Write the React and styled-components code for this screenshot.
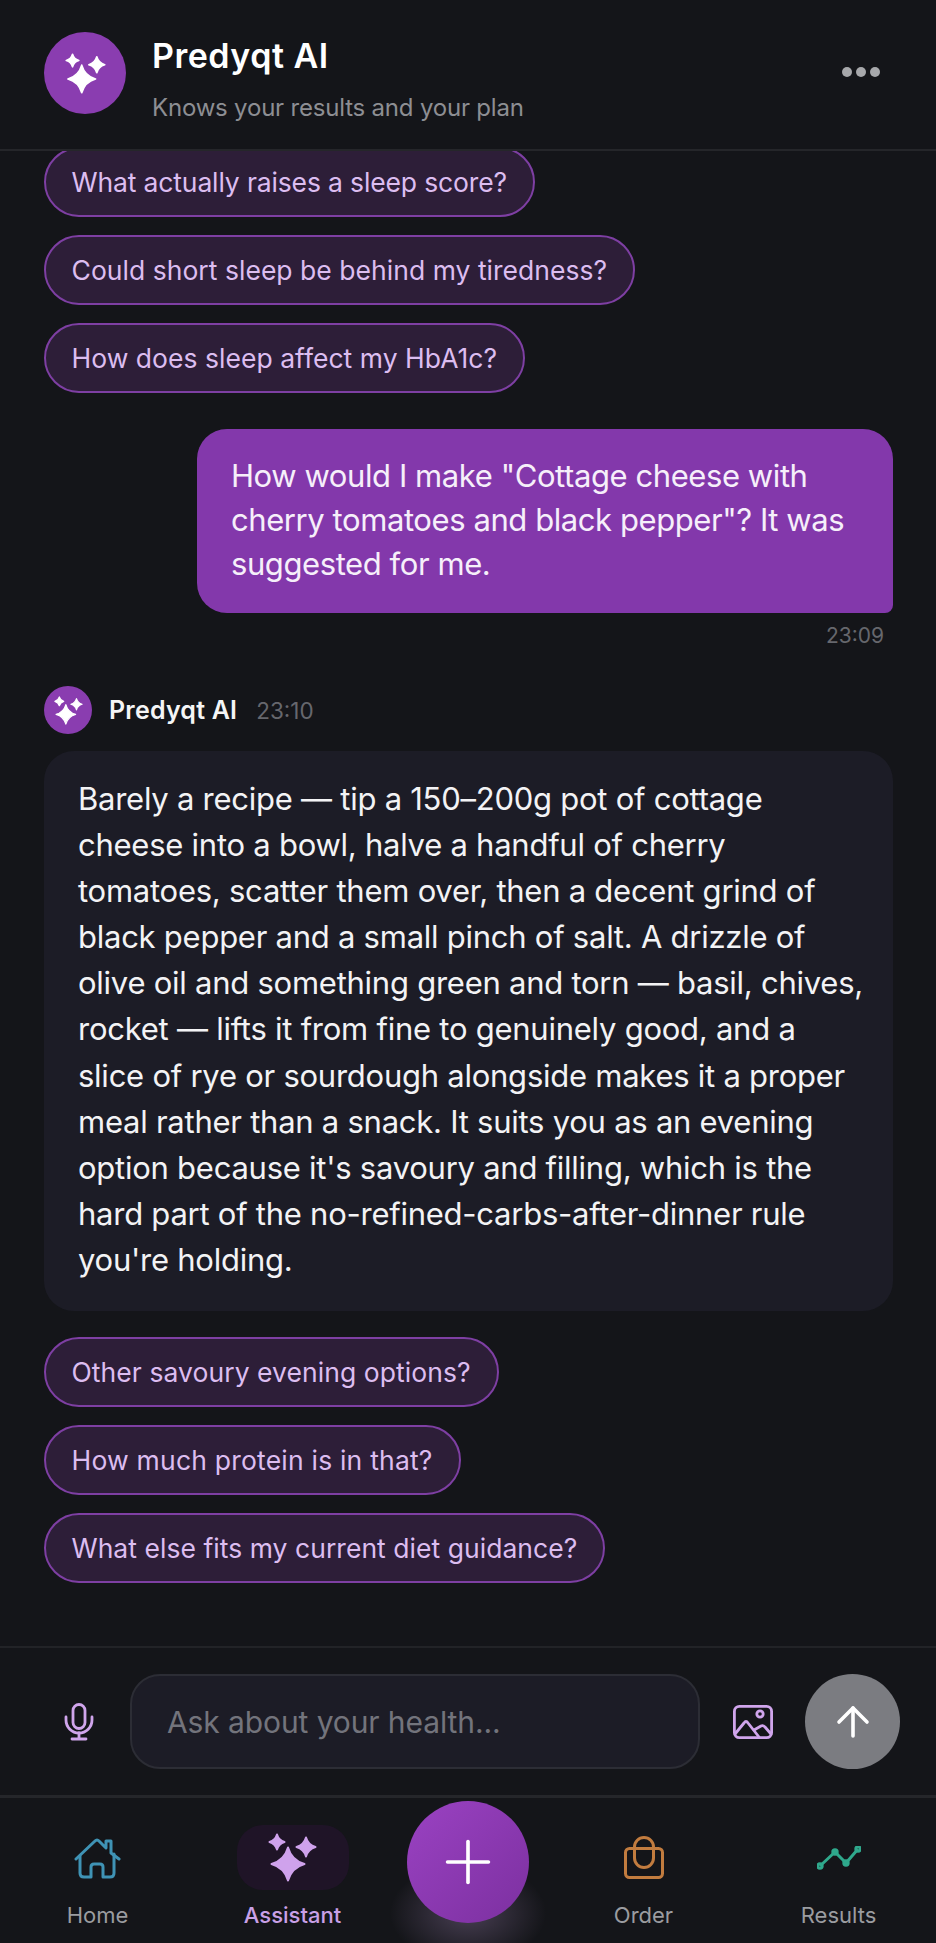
import React from "react";
import styled, { createGlobalStyle } from "styled-components";
import { ArrowUp, Plus } from "lucide-react";

const Global = createGlobalStyle`
  html, body { margin: 0; padding: 0; background: #141519; }
  * { box-sizing: border-box; }
`;

const Screen = styled.div`
  width: 936px; height: 1943px; display: flex; flex-direction: column;
  background: #141519; color: #fff; overflow: hidden;
  font-family: Inter, "Noto Sans", sans-serif;
`;
const Header = styled.header`
  height: 151px; flex: none; display: flex; align-items: flex-start;
  padding: 32px 56px 0 44px; gap: 26px; border-bottom: 2px solid #25262a;
`;
const Avatar = styled.div`
  width: ${p => p.$size}px; height: ${p => p.$size}px; border-radius: 50%; flex: none;
  background: #8a3db0; display: flex; align-items: center; justify-content: center; color: #fff;
`;
const HeadText = styled.div`
  flex: 1; display: flex; flex-direction: column; gap: 16px; padding-top: 4px;
`;
const Title = styled.div`
  font-size: 34px; line-height: 40px; font-weight: 600; color: #fff; letter-spacing: 0.5px;
`;
const Sub = styled.div`
  font-size: 24px; line-height: 32px; color: #8d8e93; letter-spacing: -0.2px;
`;
const Dots = styled.div`
  display: flex; gap: 4px; margin-top: 35px;
  span { width: 10px; height: 10px; border-radius: 50%; background: #a7a8ab; }
`;
const Scroller = styled.main`
  flex: 1; min-height: 0; overflow: hidden; padding: 0 43px 0 44px; display: flex; flex-direction: column;
`;
const ChipList = styled.div`
  display: flex; flex-direction: column; align-items: flex-start; gap: 18px;
  margin-top: ${p => p.$top}px; flex: none;
`;
const Chip = styled.div`
  height: 70px; padding: 0 26px 0 25.5px; display: flex; align-items: center;
  border-radius: 35px; border: 2px solid #7e3fa3; background: #2d1e38; color: #dcbdf0;
  font-size: 26.5px; letter-spacing: ${p => p.$track ?? 0.03}px; white-space: nowrap;
`;
const UserBubble = styled.div`
  align-self: flex-end; width: 696px; margin-top: 36px; padding: 25px 34px 27px; flex: none;
  background: #8338ab; border-radius: 30px 30px 8px 30px;
  font-size: 31px; line-height: 44px; color: #f6effa; letter-spacing: -0.42px;
`;
const Stamp = styled.div`
  align-self: flex-end; margin: 9px 9px 0 0; font-size: 21px; line-height: 28px; color: #66676d; flex: none;
`;
const AiHead = styled.div`
  display: flex; align-items: center; margin-top: 36px; gap: 17px; flex: none;
`;
const AiName = styled.div`
  font-size: 25px; font-weight: 600; color: #f5f5f6; line-height: 32px; letter-spacing: 0.2px;
`;
const AiTime = styled.div`
  font-size: 22.5px; color: #66676d; margin-left: 2px;
`;
const Card = styled.div`
  width: 849px; margin-top: 17px; padding: 25px 26px 28px 34px; background: #1c1c26; border-radius: 30px; flex: none;
  font-size: 31px; line-height: 46.1px; color: #f3f3f5; letter-spacing: -0.25px;
`;
const InputBar = styled.section`
  height: 152px; flex: none; display: flex; align-items: center; padding: 0 36px 0 64px;
  border-top: 2px solid #222327; border-bottom: 3px solid #25262a;
`;
const Field = styled.div`
  width: 571px; height: 95px; margin-left: 36px; padding: 0 35px; display: flex; align-items: center;
  background: #1c1c26; border: 2px solid #2c2d35; border-radius: 30px;
  font-size: 30px; color: #73747c; letter-spacing: -0.1px;
`;
const IconSlot = styled.div`
  display: flex; color: #d0a5ec; margin-left: ${p => p.$ml || 0}px;
`;
const Send = styled.div`
  width: 95px; height: 95px; border-radius: 50%; background: #7b7c81; color: #fff;
  margin-left: 32px; display: flex; align-items: center; justify-content: center;
`;
const Nav = styled.nav`
  height: 145px; flex: none; display: grid; grid-template-columns: 1fr 1fr 156px 1fr 1fr;
`;
const NavItem = styled.div`
  display: flex; flex-direction: column; align-items: center; padding-top: 27px;
  font-size: 22px; line-height: 28px; color: ${p => p.$c};
  font-weight: ${p => p.$w || 400};
`;
const Pill = styled.div`
  width: 112px; height: 65px; border-radius: 26px; background: #1f1427; display: flex;
  align-items: center; justify-content: center; color: #cfa2ec; margin-bottom: 11px;
`;
const NavIcon = styled.div`
  height: 65px; margin-bottom: 11px; display: flex; align-items: center; justify-content: center; color: ${p => p.$c};
`;
const FabSlot = styled.div`position: relative;`;
const Glow = styled.div`
  position: absolute; left: 0; top: 60px; width: 156px; height: 85px;
  background: radial-gradient(ellipse 50% 60% at center 65%, rgba(150,125,170,.4), rgba(150,125,170,0) 100%);
`;
const Fab = styled.div`
  position: absolute; left: 17px; top: 3px; width: 122px; height: 122px; border-radius: 50%;
  background: linear-gradient(135deg, #9a42c2, #7c30a0); color: #fff;
  display: flex; align-items: center; justify-content: center;
`;

const star = (cx, cy, r, k = 0.22) =>
  `M${cx} ${cy - r} Q${cx + k * r} ${cy - k * r} ${cx + r} ${cy} Q${cx + k * r} ${cy + k * r} ${cx} ${cy + r} Q${cx - k * r} ${cy + k * r} ${cx - r} ${cy} Q${cx - k * r} ${cy - k * r} ${cx} ${cy - r}Z`;

const Sparkles = ({ size }) => (
  <svg width={size} height={size} viewBox="0 0 49 49" fill="currentColor" stroke="currentColor" strokeWidth="2" strokeLinejoin="round">
    <path d={star(20, 31, 16.5)} />
    <path d={star(9, 9, 7.5)} />
    <path d={star(38, 14, 9.5)} />
  </svg>
);

const MicIcon = () => (
  <svg width="30" height="38" viewBox="0 0 30 38" fill="none" stroke="currentColor" strokeWidth="2.8" strokeLinecap="round">
    <rect x="9" y="1.5" width="12" height="24" rx="6" />
    <path d="M2 14 V17 A13 13 0 0 0 28 17 V14" />
    <path d="M15 30 V36 M8 36 H22" />
  </svg>
);
const ImageIcon = () => (
  <svg width="40" height="34" viewBox="0 0 40 34" fill="none" stroke="currentColor" strokeWidth="2.8" strokeLinejoin="round" strokeLinecap="round">
    <rect x="1.4" y="1.4" width="37.2" height="31.2" rx="5" />
    <circle cx="27" cy="9" r="3.2" />
    <path d="M2 29 L11 18 Q13 15 15 18 L26 32" />
    <path d="M21 25 L28 21 Q30 20 32 22 L38 29" />
  </svg>
);
const HouseIcon = () => (
  <svg width="47" height="42" viewBox="0 0 47 42" fill="none" stroke="currentColor" strokeWidth="3" strokeLinejoin="round" strokeLinecap="round">
    <path d="M2 22 L21 4 Q23 2 25 4 L32 11 V4 H37 V16 L45 22" />
    <path d="M6 19 V36 Q6 40 10 40 H17 V30 Q17 27 20 27 H26 Q29 27 29 30 V40 H36 Q40 40 40 36 V17" />
  </svg>
);
const BagIcon = () => (
  <svg width="40" height="43" viewBox="0 0 40 43" fill="none" stroke="currentColor" strokeWidth="3" strokeLinejoin="round">
    <rect x="1.5" y="12.5" width="37" height="29" rx="4" />
    <rect x="10.5" y="1.5" width="19" height="30" rx="9.5" />
  </svg>
);
const TrendIcon = () => (
  <svg width="44" height="24" viewBox="0 0 44 24" fill="none" stroke="currentColor" strokeWidth="3" strokeLinejoin="round">
    <path d="M3 20 L18 6 L29 17 L41 3" />
    <circle cx="3" cy="20" r="2.2" />
    <circle cx="18" cy="6" r="2.2" />
    <circle cx="29" cy="17" r="2.2" />
    <circle cx="41" cy="3" r="2.2" />
  </svg>
);

export default function App() {
  return (
    <Screen>
      <Global />
      <Header>
        <Avatar $size={82}><Sparkles size={41} /></Avatar>
        <HeadText>
          <Title>Predyqt AI</Title>
          <Sub>Knows your results and your plan</Sub>
        </HeadText>
        <Dots><span /><span /><span /></Dots>
      </Header>
      <Scroller>
        <ChipList $top={-4}>
          <Chip $track={-0.14}>What actually raises a sleep score?</Chip>
          <Chip>Could short sleep be behind my tiredness?</Chip>
          <Chip>How does sleep affect my HbA1c?</Chip>
        </ChipList>
        <UserBubble>How would I make "Cottage cheese with cherry tomatoes and black pepper"? It was suggested for me.</UserBubble>
        <Stamp>23:09</Stamp>
        <AiHead>
          <Avatar $size={48}><Sparkles size={29} /></Avatar>
          <AiName>Predyqt AI</AiName>
          <AiTime>23:10</AiTime>
        </AiHead>
        <Card>Barely a recipe — tip a 150–200g pot of cottage cheese into a bowl, halve a handful of cherry tomatoes, scatter them over, then a decent grind of black pepper and a small pinch of salt. A drizzle of olive oil and something green and torn — basil, chives, rocket — lifts it from fine to genuinely good, and a slice of rye or sourdough alongside makes it a proper meal rather than a snack. It suits you as an evening option because it's savoury and filling, which is the hard part of the no-refined-carbs-after-dinner rule you're holding.</Card>
        <ChipList $top={26}>
          <Chip $track={0.07}>Other savoury evening options?</Chip>
          <Chip $track={0.21}>How much protein is in that?</Chip>
          <Chip $track={0.04}>What else fits my current diet guidance?</Chip>
        </ChipList>
      </Scroller>
      <InputBar>
        <IconSlot><MicIcon /></IconSlot>
        <Field>Ask about your health...</Field>
        <IconSlot $ml={33}><ImageIcon /></IconSlot>
        <Send><ArrowUp size={48} strokeWidth={1.8} /></Send>
      </InputBar>
      <Nav>
        <NavItem $c="#9b9ca0"><NavIcon $c="#3f93b5"><HouseIcon /></NavIcon>Home</NavItem>
        <NavItem $c="#c9a0e6" $w={500}><Pill><Sparkles size={49} /></Pill>Assistant</NavItem>
        <FabSlot>
          <Glow />
          <Fab><Plus size={70} strokeWidth={1.25} /></Fab>
        </FabSlot>
        <NavItem $c="#9b9ca0"><NavIcon $c="#c27c3f"><BagIcon /></NavIcon>Order</NavItem>
        <NavItem $c="#9b9ca0"><NavIcon $c="#2fa88c"><TrendIcon /></NavIcon>Results</NavItem>
      </Nav>
    </Screen>
  );
}
